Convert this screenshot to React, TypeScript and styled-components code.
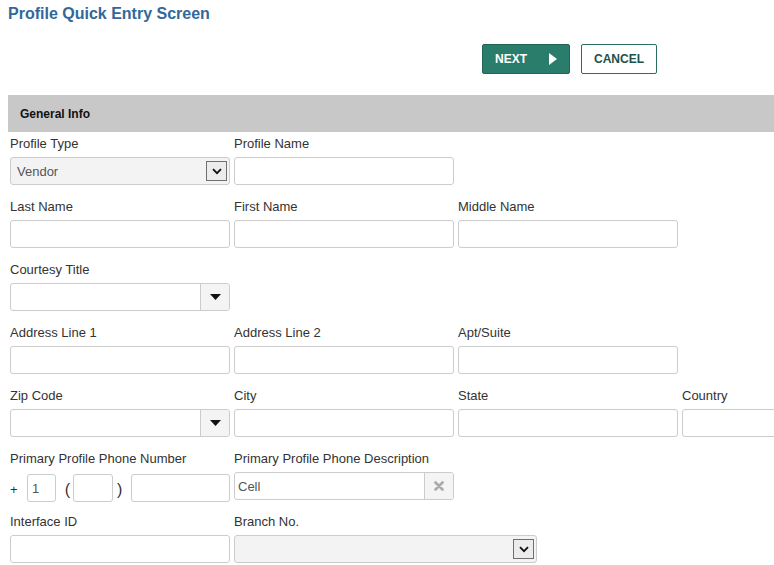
import React from 'react';
import styled, { createGlobalStyle } from 'styled-components';

const Global = createGlobalStyle`
  html, body { margin: 0; padding: 0; overflow: hidden; background: #fff; }
  body { font-family: "Liberation Sans", Arial, sans-serif; }
  * { box-sizing: border-box; }
`;

const Page = styled.div`
  padding-left: 8px;
  width: 1000px;
`;

const Title = styled.h1`
  margin: 0;
  padding-top: 4px;
  font-size: 16px;
  line-height: 20px;
  font-weight: 700;
  color: #33679a;
`;

const Toolbar = styled.div`
  display: flex;
  gap: 11px;
  margin-top: 20px;
  padding-left: 474px;
`;

const NextButton = styled.button`
  width: 88px;
  height: 30px;
  display: flex;
  align-items: center;
  justify-content: space-between;
  padding: 0 12px 0 12px;
  background: #2a7d6b;
  border: 1px solid #206556;
  border-radius: 2px;
  color: #fff;
  font-family: "Liberation Sans", Arial, sans-serif;
  font-weight: 700;
  font-size: 12px;
`;

const CancelButton = styled.button`
  width: 76px;
  height: 30px;
  padding: 0;
  background: #fff;
  border: 1px solid #2a6e60;
  border-radius: 2px;
  color: #22504a;
  font-family: "Liberation Sans", Arial, sans-serif;
  font-weight: 700;
  font-size: 12px;
`;

const Section = styled.section`
  margin-top: 21px;
  width: 900px;
`;

const SectionHeader = styled.div`
  height: 37px;
  display: flex;
  align-items: center;
  padding-left: 12px;
  background: #c8c8c8;
  font-size: 12px;
  font-weight: 700;
  color: #111;
`;

const Form = styled.div`
  display: flex;
  flex-direction: column;
  gap: 12px;
  padding: 2px 0 0 2px;
`;

const Row = styled.div`
  display: flex;
  gap: 4px;
`;

const Field = styled.div<{ $w?: number }>`
  width: ${(p) => p.$w ?? 220}px;
  display: flex;
  flex-direction: column;
`;

const Label = styled.label`
  font-size: 13px;
  line-height: 18px;
  color: #333;
  padding-top: 1px;
  margin-bottom: 4px;
  white-space: nowrap;
`;

const TextInput = styled.input`
  width: 100%;
  height: 28px;
  border: 1px solid #ccc;
  border-radius: 3px;
  padding: 0 4px;
  font-family: "Liberation Sans", Arial, sans-serif;
  font-size: 13px;
  color: #555;
  background: #fff;
  outline: none;
`;

const SelectBox = styled.div`
  height: 28px;
  display: flex;
  align-items: center;
  padding: 0 2px 0 6px;
  border: 1px solid #ccc;
  border-radius: 3px;
  background: #f3f3f3;
  font-size: 13px;
  color: #555;
`;

const SelectValue = styled.span`
  flex: 1;
`;

const ArrowBox = styled.span`
  width: 21px;
  height: 20px;
  display: flex;
  align-items: center;
  justify-content: center;
  border: 1px solid #6f6f6f;
  background: #ececec;
`;

const Combo = styled.div`
  height: 28px;
  display: flex;
  border: 1px solid #ccc;
  border-radius: 3px;
  overflow: hidden;
  background: #fff;
  font-size: 13px;
  color: #555;
`;

const ComboText = styled.span<{ $pad?: number }>`
  flex: 1;
  display: flex;
  align-items: center;
  padding-left: ${(p) => p.$pad ?? 4}px;
`;

const SideButton = styled.span`
  width: 29px;
  display: flex;
  align-items: center;
  justify-content: center;
  border-left: 1px solid #ccc;
  background: #f4f4f4;
`;

const PhoneRow = styled.div`
  height: 28px;
  display: grid;
  grid-template-columns: 17px 29px 17px 40px 18px 99px;
  align-items: center;
`;

const Sign = styled.span<{ $size?: number; $align?: string; $pad?: string }>`
  font-size: ${(p) => p.$size ?? 13}px;
  color: #333;
  text-align: ${(p) => p.$align ?? 'left'};
  padding: ${(p) => p.$pad ?? '0'};
  line-height: 28px;
  margin-top: 4px;
`;

const Chevron = () => (
  <svg width="10" height="7" viewBox="0 0 10 7">
    <path d="M1 1.2 L5 5.2 L9 1.2" fill="none" stroke="#111" strokeWidth="1.8" />
  </svg>
);

const Caret = () => (
  <svg width="11" height="6" viewBox="0 0 11 6">
    <path d="M0 0 H11 L5.5 6 Z" fill="#111" />
  </svg>
);

const Times = () => (
  <svg width="10" height="10" viewBox="0 0 10 10">
    <path d="M1.5 1.5 L8.5 8.5 M8.5 1.5 L1.5 8.5" stroke="#aaa" strokeWidth="2.6" strokeLinecap="round" />
  </svg>
);

const Play = () => (
  <svg width="8" height="12" viewBox="0 0 8 12">
    <path d="M0 0 L8 6 L0 12 Z" fill="#fff" />
  </svg>
);

const Text = ({ label, w, value }: { label: string; w?: number; value?: string }) => (
  <Field $w={w}>
    <Label>{label}</Label>
    <TextInput defaultValue={value} />
  </Field>
);

const ComboField = ({ label }: { label: string }) => (
  <Field>
    <Label>{label}</Label>
    <Combo>
      <ComboText />
      <SideButton>
        <Caret />
      </SideButton>
    </Combo>
  </Field>
);

const SelectField = ({ label, value, w }: { label: string; value?: string; w?: number }) => (
  <Field $w={w}>
    <Label>{label}</Label>
    <SelectBox>
      <SelectValue>{value}</SelectValue>
      <ArrowBox>
        <Chevron />
      </ArrowBox>
    </SelectBox>
  </Field>
);

export default function App() {
  return (
    <Page>
      <Global />
      <Title>Profile Quick Entry Screen</Title>
      <Toolbar>
        <NextButton>
          <span>NEXT</span>
          <Play />
        </NextButton>
        <CancelButton>CANCEL</CancelButton>
      </Toolbar>
      <Section>
        <SectionHeader>General Info</SectionHeader>
        <Form>
          <Row>
            <SelectField label="Profile Type" value="Vendor" />
            <Text label="Profile Name" />
          </Row>
          <Row>
            <Text label="Last Name" />
            <Text label="First Name" />
            <Text label="Middle Name" />
          </Row>
          <Row>
            <ComboField label="Courtesy Title" />
          </Row>
          <Row>
            <Text label="Address Line 1" />
            <Text label="Address Line 2" />
            <Text label="Apt/Suite" />
          </Row>
          <Row>
            <ComboField label="Zip Code" />
            <Text label="City" />
            <Text label="State" />
            <Text label="Country" />
          </Row>
          <Row>
            <Field>
              <Label>Primary Profile Phone Number</Label>
              <PhoneRow>
                <Sign>+</Sign>
                <TextInput defaultValue="1" />
                <Sign $size={16} $align="right" $pad="0 3px 0 0">(</Sign>
                <TextInput />
                <Sign $size={16} $pad="0 0 0 4px">)</Sign>
                <TextInput />
              </PhoneRow>
            </Field>
            <Field>
              <Label>Primary Profile Phone Description</Label>
              <Combo>
                <ComboText $pad={3}>Cell</ComboText>
                <SideButton>
                  <Times />
                </SideButton>
              </Combo>
            </Field>
          </Row>
          <Row>
            <Text label="Interface ID" />
            <SelectField label="Branch No." w={303} />
          </Row>
        </Form>
      </Section>
    </Page>
  );
}
